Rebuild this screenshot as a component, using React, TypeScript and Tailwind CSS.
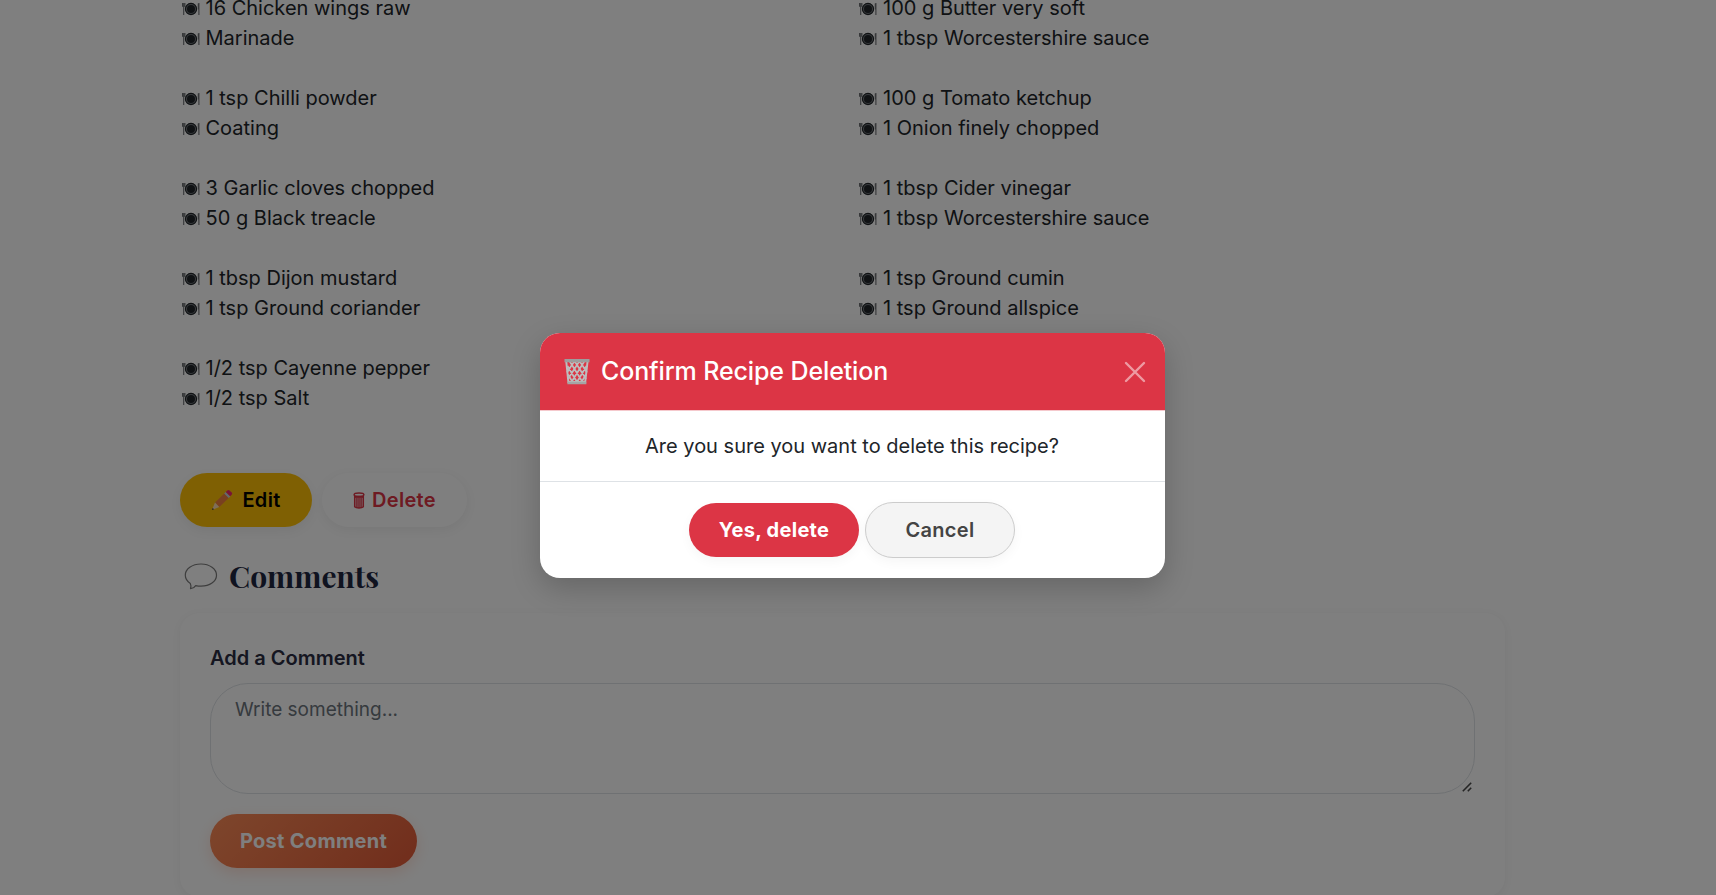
import React from 'react';

const left = [
  ['16 Chicken wings raw', 'Marinade'],
  ['1 tsp Chilli powder', 'Coating'],
  ['3 Garlic cloves chopped', '50 g Black treacle'],
  ['1 tbsp Dijon mustard', '1 tsp Ground coriander'],
  ['1/2 tsp Cayenne pepper', '1/2 tsp Salt'],
];
const right = [
  ['100 g Butter very soft', '1 tbsp Worcestershire sauce'],
  ['100 g Tomato ketchup', '1 Onion finely chopped'],
  ['1 tbsp Cider vinegar', '1 tbsp Worcestershire sauce'],
  ['1 tsp Ground cumin', '1 tsp Ground allspice'],
];

function Plate() {
  return (
    <svg viewBox="0 0 18 16" className="mr-[6px] mt-[2px] h-4 w-[18px] shrink-0">
      <circle cx="9" cy="8" r="5.9" fill="#72777c" />
      <circle cx="9" cy="8" r="5.6" fill="none" stroke="#212529" strokeWidth="1.1" />
      <circle cx="9" cy="8" r="4" fill="#212529" />
      <path d="M.5 2v3.2h2.4V2M1.7 2v12" fill="none" stroke="#212529" strokeOpacity=".65" strokeWidth="1.1" />
      <path d="M16.9 2v12M16.3 2.4v6" fill="none" stroke="#212529" strokeOpacity=".65" strokeWidth="1.1" />
    </svg>
  );
}

function Column({ groups }: { groups: string[][] }) {
  return (
    <div className="flex w-[677.5px] flex-col gap-[30px]">
      {groups.map((g, i) => (
        <div key={i}>
          {g.map((t) => (
            <div key={t} className="flex h-[30px] items-center pl-[1.5px] leading-[30px]">
              <Plate />
              {t}
            </div>
          ))}
        </div>
      ))}
    </div>
  );
}

function Pencil() {
  return (
    <svg viewBox="0 0 22 22" className="h-[22px] w-[22px]">
      <path d="M4 13.6 13.5 4.2 18 8.7 8.3 18z" fill="#f3813f" />
      <path d="M4 13.6 8.3 18 1 21z" fill="#ffdcb4" />
      <path d="M1.7 19 1 21l2-.8z" fill="#222" />
      <path d="m13.2 4.5 1.6-1.6 4.5 4.5-1.6 1.6z" fill="#c9d3dc" />
      <path d="m14.8 2.9 1.5-1.5a1.6 1.6 0 0 1 2.2 0l2.2 2.2a1.6 1.6 0 0 1 0 2.2l-1.5 1.5z" fill="#f3286c" />
    </svg>
  );
}

function Bin() {
  return (
    <svg viewBox="0 0 12 17" className="h-[17px] w-3" fill="none" stroke="#dc3545">
      <path d="M1.6 4.5v10.300c1.500 1.600 7.300 1.600 8.800 0V4.500z" fill="#dc3545" fillOpacity=".4" strokeWidth="1.3" />
      <ellipse cx="6" cy="2.7" rx="4.900" ry="1.700" strokeWidth="1.500" />
      <path d="M1 5.300h10" strokeWidth="1" />
      <path d="M3.900 6v9.500M6 6v10M8.100 6v9.500" strokeWidth="1.100" />
    </svg>
  );
}

function Basket() {
  return (
    <svg viewBox="0 0 26 27" className="h-[27px] w-[26px]" fill="none" stroke="#bdbdbd">
      <path d="m2.200 3 2.200 21h16.800l2.400-21z" strokeWidth="2" />
      <path
        d="M3.500 8 13 24M5.500 3 18.500 24M10.500 3l11.500 18M15.500 3 23 14.500M4 16.500 8.500 24M22.500 8 13 24M20.500 3 7.500 24M15.500 3 4 21M10.500 3 3 14.500M22 16.500 17.500 24"
        strokeWidth="1.700"
      />
      <path d="M.5 2.600h25" stroke="#9d9d9d" strokeWidth="3.400" />
      <path d="M3.400 25h19" stroke="#a5a5a5" strokeWidth="2.600" />
    </svg>
  );
}

function Bubble() {
  return (
    <svg viewBox="0 0 34 27" className="h-[27px] w-[34px]" fill="none" stroke="#7d7d7d" strokeWidth="1.200" strokeLinejoin="round">
      <path d="M17 1C8 1 1.300 6 1.300 12.200c0 3.400 2 6.200 5 8.300.7 1.400.9 3.200.2 5.100 2.400-.2 4.200-1.400 5.200-3 1.700.4 3.400.6 5.300.6 8.700 0 15.500-4.800 15.500-11S25.700 1 17 1z" />
    </svg>
  );
}

export default function App() {
  return (
    <div className="relative h-[895px] w-full overflow-hidden bg-[#fefefe] font-['Inter',sans-serif] text-[20px] text-[#212529]">
      <main className="flex flex-col pl-[180px]">
        <div className="-mt-[7px] flex h-[480px]">
          <Column groups={left} />
          <Column groups={right} />
        </div>
        <div className="flex h-[54px] gap-[10px] font-semibold tracking-[0.3px]">
          <button className="flex w-[132px] items-center justify-center gap-[9px] rounded-full bg-[#ffc107] text-black shadow-[0_4px_12px_rgba(0,0,0,0.06)]">
            <Pencil />
            Edit
          </button>
          <button className="flex w-[145px] items-center justify-center gap-[7px] rounded-full bg-white text-[#dc3545] shadow-[0_3px_12px_rgba(0,0,0,0.06)]">
            <Bin />
            Delete
          </button>
        </div>
        <h2 className="mt-[29px] flex h-[40px] items-center pl-[4px] text-[#1f2640]">
          <Bubble />
          <span className="ml-[11px] font-['Playfair_Display','Liberation_Serif',serif] text-[30px] font-bold">Comments</span>
        </h2>
        <section className="mt-[17px] h-[284px] w-[1325px] rounded-[20px] bg-white px-[30px] pt-[30px] shadow-[0_2px_10px_rgba(0,0,0,0.05)]">
          <label className="block h-[30px] font-semibold leading-[30px] text-[#2b2d42]">Add a Comment</label>
          <div className="relative mt-[10px] h-[111px] w-[1265px]">
            <textarea
              placeholder="Write something..."
              className="block h-[111px] w-[1265px] resize-none rounded-[38px] border border-[#dee2e6] bg-transparent px-[24px] py-[11px] text-[19px] leading-[30px] placeholder-[#6c757d]"
            />
            <svg viewBox="0 0 10 10" className="absolute bottom-[2px] right-[3px] h-[10px] w-[10px]" stroke="#4a4a4a" strokeWidth="1.600">
              <path d="M.8 9.200 9.200.8M5.800 9.200l3.400-3.400" />
            </svg>
          </div>
          <button className="mt-[20px] h-[54px] w-[207px] rounded-full bg-linear-135 from-[#fc8c58] to-[#e25a38] font-bold tracking-[0.3px] text-white shadow-[0_5px_15px_rgba(255,107,53,0.2)]">
            Post Comment
          </button>
        </section>
      </main>

      <div className="absolute inset-0 flex items-start bg-black/50 pl-[540px] pt-[333px]">
        <div role="dialog" className="h-[245px] w-[625px] overflow-hidden rounded-[20px] bg-white shadow-[0_10px_30px_rgba(0,0,0,0.2)]">
          <div className="flex h-[78px] items-center border-b border-[#f5c9cd] bg-[#dc3545] pl-[24px] pr-[19px] text-white">
            <Basket />
            <h5 className="ml-[11px] text-[25px] font-medium tracking-[-0.12px]">Confirm Recipe Deletion</h5>
            <svg viewBox="0 0 22 22" className="ml-auto mt-[1px] h-[22px] w-[22px]" stroke="#fff" strokeOpacity=".5" strokeWidth="2.400" strokeLinecap="round">
              <path d="m2 2 18 18M20 2 2 20" />
            </svg>
          </div>
          <div className="flex h-[71px] items-center justify-center border-b border-[#dee2e6] pr-[1px]">Are you sure you want to delete this recipe?</div>
          <div className="flex h-[96px] items-center justify-center gap-[6px] pr-[1px] tracking-[0.3px]">
            <button className="h-[54px] w-[170px] rounded-full bg-[#dc3545] font-bold text-white shadow-[0_4px_12px_rgba(0,0,0,0.04)]">Yes, delete</button>
            <button className="h-[56px] w-[150px] rounded-full border border-[#ccc] bg-[#f4f4f4] font-semibold text-[#444] shadow-[0_4px_12px_rgba(0,0,0,0.04)]">Cancel</button>
          </div>
        </div>
      </div>
    </div>
  );
}
